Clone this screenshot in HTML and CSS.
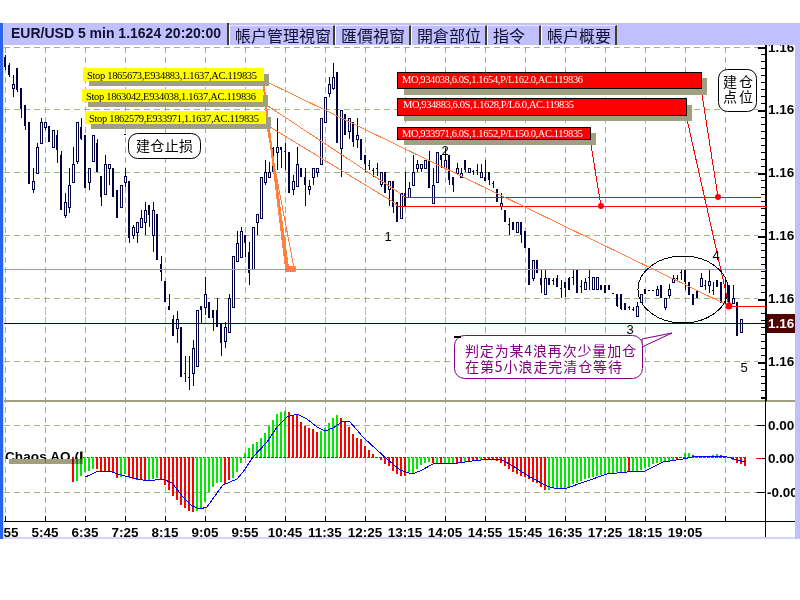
FILE: index.html
```html
<!DOCTYPE html>
<html lang="zh">
<head>
  <meta charset="UTF-8">
  <title>EUR/USD 5 min</title>
  <link rel="stylesheet" href="styles.css">
</head>
<body>
  <div class="terminal">
    <div class="tabs">
      <div class="tab tab-title">EUR/USD 5 min 1.1624 20:20:00</div>
      <div class="tab">帳戶管理視窗</div>
      <div class="tab">匯價視窗</div>
      <div class="tab">開倉部位</div>
      <div class="tab tab-wide">指令</div>
      <div class="tab">帳戶概要</div>
    </div>

    <svg class="chart" viewBox="4 45 791 494" width="791" height="494">
      <defs>
        <clipPath id="aoClip"><rect x="4" y="445" width="80" height="14"></rect></clipPath>
      </defs>

      <g id="grid" class="crisp"></g>
      <g id="candles" class="crisp"></g>
      <g id="bars" class="crisp"></g>
      <polyline id="signal" class="signal crisp"></polyline>

      <!-- price lines -->
      <g class="crisp">
        <line class="ln-orange" x1="4" y1="269.5" x2="766" y2="269.5"></line>
        <line class="ln-maroon" x1="4" y1="323.5" x2="766" y2="323.5"></line>
        <line class="ln-red" x1="405" y1="197.5" x2="761" y2="197.5"></line>
        <line class="ln-red" x1="397" y1="206.5" x2="766" y2="206.5"></line>
        <line class="ln-red" x1="729" y1="306.5" x2="766" y2="306.5"></line>
      </g>

      <!-- stop lines -->
      <polyline class="ln-orange" points="263,80 727,305"></polyline>
      <polyline class="ln-orange" points="262,102 395,190 405,197"></polyline>
      <polyline class="ln-orange" points="270,127 395,203 397,206"></polyline>
      <line class="ln-orange-thick" x1="263" y1="80" x2="286" y2="268"></line>
      <line class="ln-orange-thick" x1="265" y1="102" x2="288" y2="268"></line>
      <line class="ln-orange" x1="267" y1="127" x2="294" y2="268"></line>
      <rect class="fill-orange" x="285" y="266" width="11" height="6" rx="1"></rect>

      <!-- order lines -->
      <line class="ln-red-thin" x1="701" y1="88" x2="718" y2="197"></line>
      <line class="ln-red-thin" x1="686" y1="115" x2="729" y2="306"></line>
      <line class="ln-red-thin" x1="590" y1="139" x2="601" y2="206"></line>
      <circle class="fill-red" cx="718" cy="197" r="3"></circle>
      <circle class="fill-red" cx="601" cy="206" r="3"></circle>
      <circle class="fill-red" cx="729" cy="306" r="3.5"></circle>

      <ellipse class="wave-ring" cx="683" cy="289.5" rx="45" ry="33.5"></ellipse>

      <!-- stop labels -->
      <g class="crisp">
        <rect class="shadow" x="89" y="74" width="180" height="12"></rect>
        <rect class="fill-yellow" x="83" y="68" width="181" height="13"></rect>
        <rect class="shadow" x="88" y="95" width="180" height="12"></rect>
        <rect class="fill-yellow" x="82" y="89" width="181" height="13"></rect>
        <rect class="shadow" x="91" y="117" width="180" height="12"></rect>
        <rect class="fill-yellow" x="85" y="111" width="181" height="13"></rect>
      </g>
      <text class="order-text" x="87" y="78.5" textLength="170">Stop 1865673,E934883,1.1637,AC.119835</text>
      <text class="order-text" x="86" y="99.5" textLength="170">Stop 1863042,E934038,1.1637,AC.119836</text>
      <text class="order-text" x="89" y="121.5" textLength="170">Stop 1862579,E933971,1.1637,AC.119835</text>

      <!-- order labels -->
      <g class="crisp">
        <rect class="shadow" x="404" y="78" width="303" height="17"></rect>
        <rect class="order-box" x="397.5" y="72.5" width="304" height="16"></rect>
        <rect class="shadow" x="404" y="105" width="288" height="16"></rect>
        <rect class="order-box" x="397.5" y="98.5" width="289" height="17"></rect>
        <rect class="shadow" x="404" y="133" width="192" height="12"></rect>
        <rect class="order-box" x="397.5" y="127.5" width="193" height="12"></rect>
      </g>
      <text class="order-text order-white" x="402" y="83" textLength="181">MO,934038,6.0S,1.1654,P/L162.0,AC.119836</text>
      <text class="order-text order-white" x="403" y="108" textLength="171">MO,934883,6.0S,1.1628,P/L6.0,AC.119835</text>
      <text class="order-text order-white" x="402" y="137" textLength="181">MO,933971,6.0S,1.1652,P/L150.0,AC.119835</text>

      <!-- notes -->
      <rect class="note" x="128.5" y="133.5" width="72" height="25" rx="9"></rect>
      <text class="note-text" x="136" y="151" textLength="57">建仓止损</text>
      <rect class="note" x="718.5" y="69.5" width="38" height="42" rx="9"></rect>
      <text class="note-text" x="723" y="87" textLength="30">建仓</text>
      <text class="note-text" x="723" y="102" textLength="30">点位</text>

      <polygon class="note-tail" points="642,339 672,333 642,347"></polygon>
      <rect class="note-purple" x="454.5" y="335.5" width="188" height="43" rx="10"></rect>
      <text class="note-text text-purple" x="465" y="356" textLength="171">判定为某4浪再次少量加仓</text>
      <text class="note-text text-purple" x="465" y="372" textLength="157">在第5小浪走完清仓等待</text>
      <rect class="fill-black" x="454" y="336" width="7" height="2"></rect>
      <rect class="fill-black" x="124" y="134" width="2" height="1"></rect>

      <!-- wave counts -->
      <text class="wave" x="388" y="241">1</text>
      <text class="wave" x="445" y="155">2</text>
      <text class="wave" x="630" y="334">3</text>
      <text class="wave" x="716" y="260">4</text>
      <text class="wave" x="744" y="372">5</text>

      <!-- indicator name -->
      <text class="axis-text" x="5" y="461" clip-path="url(#aoClip)" textLength="78">Chaos AO (I</text>
      <rect class="shadow-over" x="9" y="459" width="74" height="5"></rect>
      <rect class="shadow-over" x="80" y="451" width="3" height="8"></rect>

      <!-- price axis -->
      <rect class="fill-maroon" x="767" y="314" width="28" height="19"></rect>
      <text class="axis-text" x="768" y="52">1.16</text>
      <text class="axis-text" x="768" y="114">1.16</text>
      <text class="axis-text" x="768" y="177">1.16</text>
      <text class="axis-text" x="768" y="240">1.16</text>
      <text class="axis-text" x="768" y="303">1.16</text>
      <text class="axis-text axis-white" x="768" y="328">1.16</text>
      <text class="axis-text" x="768" y="366">1.16</text>
      <text class="axis-text" x="768" y="430">0.00</text>
      <text class="axis-text" x="768" y="463">0.00</text>
      <text class="axis-text" x="767" y="497">-0.00</text>

      <!-- time axis -->
      <text class="axis-text time" x="5" y="537">4:55</text>
      <text class="axis-text time" x="45" y="537">5:45</text>
      <text class="axis-text time" x="85" y="537">6:35</text>
      <text class="axis-text time" x="125" y="537">7:25</text>
      <text class="axis-text time" x="165" y="537">8:15</text>
      <text class="axis-text time" x="205" y="537">9:05</text>
      <text class="axis-text time" x="245" y="537">9:55</text>
      <text class="axis-text time" x="285" y="537">10:45</text>
      <text class="axis-text time" x="325" y="537">11:35</text>
      <text class="axis-text time" x="365" y="537">12:25</text>
      <text class="axis-text time" x="405" y="537">13:15</text>
      <text class="axis-text time" x="445" y="537">14:05</text>
      <text class="axis-text time" x="485" y="537">14:55</text>
      <text class="axis-text time" x="525" y="537">15:45</text>
      <text class="axis-text time" x="565" y="537">16:35</text>
      <text class="axis-text time" x="605" y="537">17:25</text>
      <text class="axis-text time" x="645" y="537">18:15</text>
      <text class="axis-text time" x="685" y="537">19:05</text>

      <rect class="status" x="4" y="537" width="791" height="2"></rect>
    </svg>
  </div>

  <script src="chart.js"></script>
</body>
</html>
```

FILE: styles.css
```css
body {
  margin: 0;
  background-color: #ffffff;
  font-family: "Liberation Sans", Arial, sans-serif;
}
.terminal {
  margin-top: 23px;
  width: 791px;
  height: 516px;
  padding-left: 1px;
  border-left: 3px solid #2a62ee;
  border-right: 5px solid #c0c0ff;
  background-color: #c8d8ff;
  display: flex;
  flex-direction: column;
  overflow: hidden;
}
.tabs {
  display: flex;
  height: 22px;
  flex: none;
  background-color: #c0c0ff;
}
.tab {
  padding: 0 6px 0 5px;
  margin-top: 2px;
  border-top: 1px solid #e8e8ff;
  border-left: 1px solid #ffffff;
  border-right: 2px solid #404020;
  font-family: "Noto Sans CJK TC", sans-serif;
  font-size: 16px;
  line-height: 19px;
  color: #101030;
  box-sizing: border-box;
  width: 76px;
  white-space: nowrap;
}
.tab:nth-child(2) {
  width: 106px;
}
.tab-wide {
  width: 54px;
}
.tab-title {
  width: 225px;
  margin-top: 0;
  padding: 0 0 0 7px;
  border-top: 0;
  border-left: 0;
  font-family: "Liberation Sans", sans-serif;
  font-size: 14px;
  font-weight: bold;
  line-height: 21px;
}
.chart {
  display: block;
  flex: none;
  background-color: #ffffff;
}
.crisp {
  shape-rendering: crispEdges;
}
.grid-line {
  stroke: #a0b880;
  stroke-width: 1;
  stroke-dasharray: 6 4;
}
.grid-blue {
  stroke: #a8c4f0;
  stroke-width: 1;
  stroke-dasharray: 6 4;
}
.panel-split {
  fill: #a09f80;
}
.tick {
  fill: #000000;
}
.candle {
  fill: #000040;
}
.candle-hollow {
  fill: #ffffff;
  stroke: #000040;
  stroke-width: 1;
}
.bar-red {
  fill: #ff0000;
}
.bar-green {
  fill: #00e800;
}
.zero-line {
  stroke: #ff0000;
  stroke-width: 1;
  stroke-dasharray: 3 1;
}
.signal {
  fill: none;
  stroke: #0000f0;
  stroke-width: 1;
}
.ln-orange {
  fill: none;
  stroke: #ff8040;
  stroke-width: 1;
  shape-rendering: crispEdges;
}
.ln-maroon {
  stroke: #400000;
  stroke-width: 1;
}
.ln-red {
  stroke: #ff0000;
  stroke-width: 1;
}
.ln-red-thin {
  stroke: #ff0000;
  stroke-width: 1;
  shape-rendering: crispEdges;
}
.ln-orange-thick {
  stroke: #ff8040;
  stroke-width: 2;
  shape-rendering: crispEdges;
}
.fill-orange {
  fill: #ff8040;
}
.fill-red {
  fill: #ff0000;
}
.fill-yellow {
  fill: #ffff00;
}
.fill-black {
  fill: #000000;
}
.fill-maroon {
  fill: #500000;
}
.wave-ring {
  fill: none;
  stroke: #000000;
  stroke-width: 1;
  shape-rendering: crispEdges;
}
.shadow {
  fill: #a09f80;
}
.shadow-over {
  fill: #a09f80;
  mix-blend-mode: multiply;
}
.order-box {
  fill: #ff0000;
  stroke: #000000;
  stroke-width: 1;
}
.order-text {
  font-family: "Liberation Serif", serif;
  font-size: 10.5px;
  fill: #000000;
}
.order-white {
  fill: #ffffff;
}
.note {
  fill: #ffffff;
  stroke: #000000;
  stroke-width: 1;
}
.note-purple {
  fill: #ffffff;
  stroke: #800080;
  stroke-width: 1;
}
.note-tail {
  fill: #ffffff;
  stroke: #800080;
  stroke-width: 1;
}
.note-text {
  font-family: "Noto Sans CJK SC", sans-serif;
  font-size: 14px;
  fill: #000000;
}
.text-purple {
  fill: #800080;
}
.wave {
  font-family: "Liberation Sans", sans-serif;
  font-size: 13px;
  text-anchor: middle;
  fill: #000000;
}
.axis-text {
  font-family: "Liberation Sans", sans-serif;
  font-size: 13.5px;
  font-weight: bold;
  fill: #000000;
}
.axis-white {
  fill: #ffffff;
}
.time {
  text-anchor: middle;
}
.status {
  fill: #d4d4fa;
}
```

FILE: chart.js
```js
const NS = "http://www.w3.org/2000/svg";

// high, low, body top, body bottom, hollow - page pixels, one bar every 4px from x=5
const candles = [
  [55,70,57,67,0],[63,77,65,75,0],[75,97,84,88,1],[68,92,68,90,0],[88,118,88,109,0],
  [105,130,105,126,0],[122,184,122,184,0],[168,193,181,189,1],[143,173,147,173,1],[118,143,122,143,1],
  [122,130,122,127,1],[126,142,126,142,0],[130,147,130,147,1],[130,163,135,150,0],[151,210,155,210,0],
  [193,218,202,215,1],[168,213,185,207,1],[147,182,164,182,1],[122,164,122,161,1],[118,140,127,139,0],
  [135,188,135,188,0],[168,190,168,182,1],[135,161,135,161,1],[139,172,143,172,0],[176,206,176,197,0],
  [155,194,164,194,1],[164,185,164,168,1],[168,197,168,197,0],[190,218,190,218,0],[185,207,185,207,1],
  [168,187,176,182,1],[181,243,181,238,0],[225,239,227,235,1],[222,243,222,232,1],[210,227,218,227,1],
  [202,235,210,222,1],[205,227,205,215,0],[202,252,210,235,1],[214,260,214,260,0],[256,281,264,272,0],
  [281,302,281,302,0],[294,310,306,310,0],[315,336,319,336,0],[311,343,319,328,1],[327,377,327,377,0],
  [356,382,373,374,0],[356,390,377,378,0],[340,386,348,373,1],[310,366,310,366,1],[306,323,306,310,0],
  [277,315,294,307,1],[302,318,302,318,0],[310,331,310,318,0],[298,327,310,327,0],[323,356,323,343,0],
  [322,348,327,341,1],[294,332,298,332,1],[256,307,256,307,1],[231,261,243,261,1],[227,257,231,257,1],
  [235,257,235,243,0],[242,285,252,273,0],[227,269,227,269,1],[214,235,214,222,1],[177,218,177,218,1],
  [160,185,172,182,1],[162,177,172,177,1],[147,172,148,172,0],[118,170,147,152,1],[147,168,147,150,0],
  [143,170,151,152,0],[152,193,152,193,0],[175,195,181,189,1],[147,186,164,186,1],[168,177,168,177,0],
  [168,206,177,185,0],[180,195,186,189,1],[168,185,168,177,1],[168,177,168,172,1],[118,164,118,164,1],
  [97,122,97,122,1],[77,97,84,93,1],[63,90,77,88,1],[72,143,72,143,0],[110,177,110,148,1],
  [114,135,114,135,0],[118,139,118,131,1],[122,147,122,142,0],[118,148,135,139,1],[139,160,139,160,0],
  [155,172,155,164,0],[160,170,165,166,0],[168,177,170,171,0],[163,176,168,169,0],[172,187,172,184,1],
  [172,193,172,193,0],[181,206,181,189,1],[181,213,181,207,0],[202,222,202,222,0],[193,218,193,218,1],
  [172,207,193,207,0],[182,197,188,197,1],[155,185,172,185,1],[160,172,164,168,1],[164,172,164,168,1],
  [160,168,160,168,1],[151,188,160,188,0],[168,203,185,203,1],[152,182,152,182,1],[155,168,155,160,0],
  [148,168,160,168,1],[155,185,155,180,0],[177,192,177,185,0],[163,173,168,173,1],[168,177,173,177,1],
  [160,172,160,170,0],[168,173,168,172,1],[170,175,171,172,0],[164,175,170,171,0],[164,177,172,177,1],
  [160,181,177,181,0],[172,185,172,180,0],[181,188,183,184,0],[189,202,189,202,0],[193,210,203,206,1],
  [210,222,210,222,0],[218,235,224,225,0],[222,230,222,230,0],[222,232,222,232,1],[222,243,222,235,0],
  [231,248,231,248,0],[248,285,248,285,0],[260,281,260,278,1],[260,273,260,273,0],[270,293,278,285,0],
  [270,294,278,294,1],[278,285,278,285,0],[278,285,280,281,0],[275,287,278,287,0],[280,298,288,289,0],
  [282,297,282,288,0],[277,290,278,290,0],[270,285,277,278,0],[270,293,270,293,0],[280,293,286,287,0],
  [278,289,282,289,1],[270,290,277,278,0],[277,289,277,289,1],[277,289,277,289,1],[285,290,285,290,0],
  [285,293,285,293,0],[285,290,285,290,0],[293,294,293,294,0],[294,307,294,306,0],[294,310,294,309,0],
  [303,310,303,310,0],[306,310,307,308,0],[307,311,309,310,0],[302,316,306,316,1],[294,302,294,302,1],
  [289,294,289,294,0],[290,291,290,291,0],[290,291,290,291,0],[286,295,289,295,1],[285,298,285,298,0],
  [298,310,298,307,1],[284,298,289,295,1],[275,283,278,282,1],[275,282,278,279,0],[270,280,272,273,0],
  [270,290,270,282,0],[282,295,282,295,0],[294,305,294,305,0],[290,298,290,298,0],[273,286,278,286,1],
  [280,290,285,286,0],[270,293,281,285,1],[282,295,290,291,0],[280,287,280,287,0],[282,303,282,303,0],
  [280,305,285,286,0],[285,307,285,307,0],[285,303,298,303,1],[302,336,302,336,0],[319,332,319,332,1]
];

// AO bars from x=73, measured at 3x from y=395; negative means a green bar
const ao = [
  260,-258,-243,-232,-228,-222,222,230,232,232,235,248,-245,-238,245,252,255,255,258,-258,-252,-248,
  252,270,285,303,315,330,340,348,350,-348,-340,-320,-290,-275,-265,-262,268,255,-250,-232,-205,
  -175,-160,-147,-142,-130,-113,-92,-75,-58,-50,-47,52,62,60,80,92,100,102,110,-108,-100,-85,-70,-60,
  70,82,97,118,130,133,152,165,178,185,195,207,212,228,237,243,243,-232,-235,-222,-210,-205,-202,
  205,-205,205,-205,-205,-205,203,203,-202,200,197,196,-195,192,192,192,197,203,212,222,232,238,244,
  247,253,260,265,275,285,-285,-280,-280,-280,-278,-275,-268,-263,-258,-253,-250,-245,-243,-240,-237,
  -235,-235,-232,-232,-232,232,-228,-228,-225,-220,-215,-208,-205,-200,-198,-197,-195,193,190,-175,-173,
  180,185,188,190,-182,-180,-176,180,185,190,195,203,208,212
];

const signal = [
  [85,477],[90,475],[98,471],[110,471],[117,474],[133,478],[148,481],[163,479],[172,483],[183,497],
  [192,506],[200,509],[207,507],[217,493],[223,485],[237,479],[243,472],[253,457],[267,442],[277,427],
  [287,417],[297,414],[307,419],[317,427],[325,431],[333,428],[343,421],[350,422],[363,437],[377,450],
  [387,459],[400,470],[412,474],[420,471],[435,463],[458,463],[472,461],[490,459],[502,460],[513,466],
  [530,477],[547,486],[557,489],[567,488],[587,481],[607,474],[627,472],[645,471],[663,462],[683,459],
  [697,456],[727,457],[745,462]
];

function add(parent, tag, attrs) {
  const el = document.createElementNS(NS, tag);
  for (const key in attrs) el.setAttribute(key, attrs[key]);
  parent.appendChild(el);
  return el;
}

function drawGrid() {
  const g = document.getElementById("grid");
  [47, 109, 172, 235, 298, 361, 425, 492].forEach(function (y) {
    add(g, "line", { class: "grid-line", x1: 4, x2: 758, y1: y + 0.5, y2: y + 0.5 });
  });
  for (let x = 5; x <= 725; x += 40) {
    add(g, "line", { class: "grid-line", x1: x + 0.5, x2: x + 0.5, y1: 47, y2: 521 });
    add(g, "line", { class: "grid-blue", x1: x + 0.5, x2: x + 0.5, y1: 309, y2: 322 });
    add(g, "rect", { class: "tick", x: x, y: 516, width: 1, height: 5 });
  }
  add(g, "rect", { class: "panel-split", x: 4, y: 400, width: 791, height: 2 });

  // axis lines and ticks
  add(g, "rect", { class: "tick", x: 4, y: 521, width: 791, height: 1 });
  add(g, "rect", { class: "tick", x: 765, y: 45, width: 2, height: 356 });
  add(g, "rect", { class: "tick", x: 765, y: 401, width: 1, height: 138 });
  for (let y = 47; y < 398; y += 7) {
    const major = (y - 47) % 63 === 0;
    add(g, "rect", { class: "tick", x: major ? 758 : 761, y: y, width: major ? 8 : 5, height: major ? 2 : 1 });
  }
  [425, 458, 492].forEach(function (y) {
    add(g, "rect", { class: "tick", x: 757, y: y, width: 9, height: 1 });
  });
  add(g, "rect", { class: "tick", x: 761, y: 398, width: 5, height: 1 });
}

function drawCandles() {
  const g = document.getElementById("candles");
  candles.forEach(function (c, i) {
    const x = 5 + i * 4;
    add(g, "rect", { class: "candle", x: x, y: c[0], width: 1, height: c[1] - c[0] });
    if (c[4]) {
      add(g, "rect", { class: "candle-hollow", x: x - 0.5, y: c[2] + 0.5, width: 2, height: c[3] - c[2] });
    } else if (c[3] > c[2]) {
      add(g, "rect", { class: "candle", x: x - 1, y: c[2], width: 2, height: c[3] - c[2] });
    }
  });
}

function drawBars() {
  const g = document.getElementById("bars");
  add(g, "line", { class: "zero-line", x1: 83, x2: 746, y1: 457.5, y2: 457.5 });
  add(g, "line", { class: "zero-line", x1: 756, x2: 762, y1: 458.5, y2: 458.5 });
  ao.forEach(function (v, i) {
    const end = 395 + Math.abs(v) / 3;
    const top = Math.min(end, 457);
    const bottom = Math.max(end, 457);
    add(g, "rect", {
      class: v < 0 ? "bar-green" : "bar-red",
      x: 72 + i * 4, y: top, width: 2, height: bottom - top
    });
  });
}

drawGrid();
drawCandles();
drawBars();
document.getElementById("signal").setAttribute("points", signal.join(" "));
```
